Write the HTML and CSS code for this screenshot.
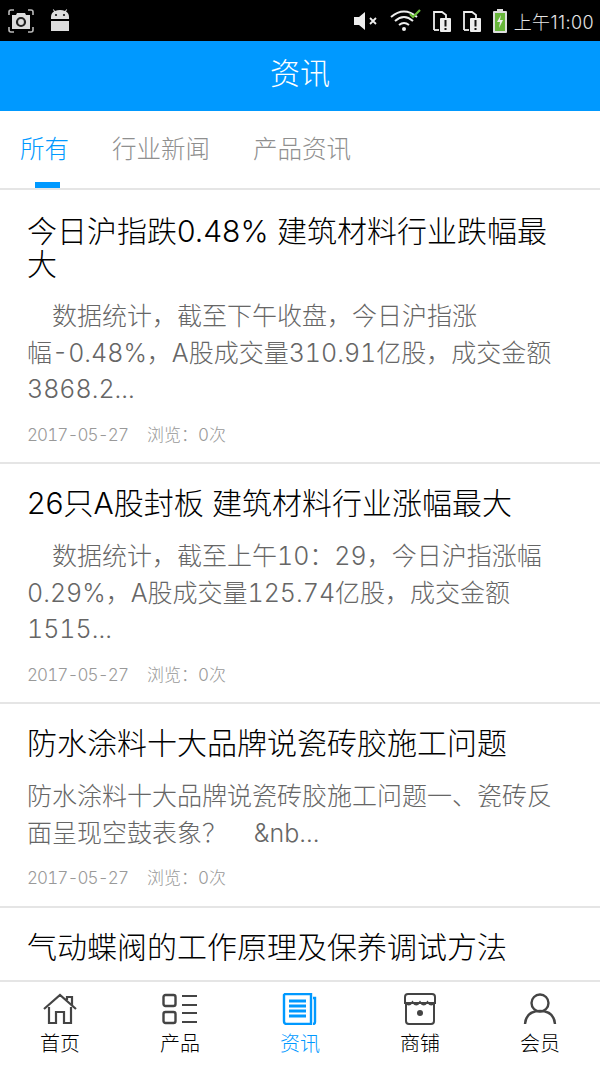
FILE: index.html
```html
<!DOCTYPE html>
<html lang="zh-CN">
<head>
<meta charset="utf-8">
<title>资讯</title>
<link rel="stylesheet" href="styles.css">
</head>
<body>
<div class="page">
  <div class="statusbar">
    <div class="status-left">
      <svg class="ic-shot" viewBox="0 0 26 24"><path d="M1 6V3q0-2 2-2h3M20 1h3q2 0 2 2v3M1 18v3q0 2 2 2h3M25 18v3q0 2-2 2h-3" fill="none" stroke="#bbb" stroke-width="1.6"/><path d="M4 6h4l1-2h8l1 2h4v14H4z" fill="#ddd"/><circle cx="13" cy="13" r="4" fill="none" stroke="#222" stroke-width="2.2"/></svg>
      <svg class="ic-android" viewBox="0 0 20 23"><path d="M1 10V8q0-4 3-5.500L2.800.6l.7-.4L5 2q5-1.800 10 0L16.500.2l.7.4L16 2.500q3 1.500 3 5.500v2z" fill="#ddd"/><circle cx="6" cy="6" r="1.100" fill="#111"/><circle cx="14" cy="6" r="1.100" fill="#111"/><path d="M1 12h18v10H1z" fill="#ddd"/></svg>
    </div>
    <div class="status-right">
      <svg class="ic-vol" viewBox="0 0 26 20"><path d="M1 6h5l6-5v18l-6-5H1z" fill="#eee"/><path d="M17 7l6 6M23 7l-6 6" stroke="#eee" stroke-width="1.800"/></svg>
      <svg class="ic-wifi" viewBox="0 0 32 24"><path d="M1 8q13-11 26 0M5 12q9-8 18 0M9 16q5-4 10 0" fill="none" stroke="#eee" stroke-width="2"/><circle cx="14" cy="20" r="2" fill="#eee"/><path d="M20 5l3 3 7-7" fill="none" stroke="#6fc13c" stroke-width="2.200"/></svg>
      <svg class="ic-sim" viewBox="0 0 20 22"><path d="M2 20V2h8l4 3v3" fill="none" stroke="#eee" stroke-width="1.800"/><path d="M2 20h5" stroke="#eee" stroke-width="1.800"/><rect x="8" y="8" width="11" height="14" rx="1" fill="#eee"/><path d="M13.500 10v6.500M13.500 18v2" stroke="#111" stroke-width="2"/></svg>
      <svg class="ic-sim" viewBox="0 0 20 22"><path d="M2 20V2h8l4 3v3" fill="none" stroke="#eee" stroke-width="1.800"/><path d="M2 20h5" stroke="#eee" stroke-width="1.800"/><rect x="8" y="8" width="11" height="14" rx="1" fill="#eee"/><path d="M13.500 10v6.500M13.500 18v2" stroke="#111" stroke-width="2"/></svg>
      <svg class="ic-batt" viewBox="0 0 16 24"><path d="M5 0h6v2h3q1 0 1 1v20q0 1-1 1H2q-1 0-1-1V3q0-1 1-1h3z" fill="#ddd"/><rect x="3" y="4" width="10" height="18" fill="#67b53a"/><path d="M9 6l-4 7h3l-1 6 4-8H8z" fill="#eee"/></svg>
      <span class="clock">上午11:00</span>
    </div>
  </div>
  <header class="topbar">资讯</header>
  <nav class="tabs">
    <a class="tab tab-active">所有</a>
    <a class="tab">行业新闻</a>
    <a class="tab">产品资讯</a>
  </nav>
  <main class="list">
    <article class="item">
      <h2 class="item-title">今日沪指跌0.48% 建筑材料行业跌幅最大</h2>
      <p class="item-text">　数据统计，截至下午收盘，今日沪指涨幅-0.48%，A股成交量310.91亿股，成交金额3868.2...</p>
      <div class="item-meta"><span class="item-date">2017-05-27</span><span>浏览：0次</span></div>
    </article>
    <article class="item">
      <h2 class="item-title">26只A股封板 建筑材料行业涨幅最大</h2>
      <p class="item-text">　数据统计，截至上午10：29，今日沪指涨幅0.29%，A股成交量125.74亿股，成交金额1515...</p>
      <div class="item-meta"><span class="item-date">2017-05-27</span><span>浏览：0次</span></div>
    </article>
    <article class="item">
      <h2 class="item-title">防水涂料十大品牌说瓷砖胶施工问题</h2>
      <p class="item-text">防水涂料十大品牌说瓷砖胶施工问题一、瓷砖反面呈现空鼓表象？ &nbsp; &nbsp;&amp;nb...</p>
      <div class="item-meta"><span class="item-date">2017-05-27</span><span>浏览：0次</span></div>
    </article>
    <article class="item">
      <h2 class="item-title">气动蝶阀的工作原理及保养调试方法</h2>
    </article>
  </main>
  <footer class="tabbar">
    <a class="nav">
      <svg class="nav-ic" viewBox="0 0 36 32"><path d="M2 16L18 2l16 14M25 7V4h5v8M7 14v16h7V19h8v11h7V14" fill="none" stroke="#444" stroke-width="2.200"/></svg>
      <span>首页</span>
    </a>
    <a class="nav">
      <svg class="nav-ic" viewBox="0 0 36 32"><rect x="1.500" y="2" width="12" height="11" rx="2" fill="none" stroke="#444" stroke-width="2.400"/><rect x="1.500" y="19" width="12" height="11" rx="2" fill="none" stroke="#444" stroke-width="2.400"/><path d="M20 3h15M20 12h15M20 20h15M20 29h15" stroke="#444" stroke-width="2.200"/></svg>
      <span>产品</span>
    </a>
    <a class="nav nav-active">
      <svg class="nav-ic" viewBox="0 0 36 32"><path d="M3 1h26v30H5q-3 0-3-3V2z" fill="none" stroke="#0099ff" stroke-width="2.400"/><path d="M31 5h2v24q0 2-2 2" fill="none" stroke="#0099ff" stroke-width="2.400"/><path d="M7 8h17M7 13h17M7 18h17M7 23h17" stroke="#0099ff" stroke-width="2.800"/></svg>
      <span>资讯</span>
    </a>
    <a class="nav">
      <svg class="nav-ic" viewBox="0 0 36 32"><path d="M6 1h24q3 0 3 3v6H3V4q0-3 3-3zM4 10v18q0 3 3 3h22q3 0 3-3V10" fill="none" stroke="#444" stroke-width="2"/><path d="M3 9q3.750 5 7.500 0q3.750 5 7.500 0q3.750 5 7.500 0q3.750 5 7.500 0" fill="none" stroke="#444" stroke-width="1.800"/><circle cx="18" cy="20" r="3" fill="#444"/></svg>
      <span>商铺</span>
    </a>
    <a class="nav">
      <svg class="nav-ic" viewBox="0 0 36 32"><circle cx="18" cy="10" r="8.500" fill="none" stroke="#444" stroke-width="2.400"/><path d="M3 31q1-13 15-13t15 13" fill="none" stroke="#444" stroke-width="2.400"/></svg>
      <span>会员</span>
    </a>
  </footer>
</div>
</body>
</html>
```
FILE: styles.css
```css
* { box-sizing: border-box; }
html, body { margin: 0; padding: 0; }
body { background: #fff; font-family: Inter, "Noto Sans CJK SC", sans-serif; font-weight: 300; font-variant-numeric: tabular-nums; }
.page { width: 600px; height: 1067px; display: flex; flex-direction: column; overflow: hidden; }

.statusbar { height: 41px; flex: none; background: #000; display: flex; justify-content: space-between; align-items: center; padding: 0 6px 0 8px; }
.status-left, .status-right { display: flex; align-items: center; }
.status-left { gap: 16px; }
.ic-shot { width: 26px; height: 24px; }
.ic-android { width: 20px; height: 23px; }
.ic-vol { width: 26px; height: 20px; }
.ic-wifi { width: 32px; height: 24px; margin-left: 11px; }
.ic-sim { width: 20px; height: 22px; margin-left: 10px; }
.ic-batt { width: 16px; height: 24px; margin-left: 10px; }
.clock { color: #e5e5e5; font-size: 18px; margin-left: 6px; letter-spacing: 0.4px; font-variant-numeric: normal; }

.topbar { height: 70px; flex: none; background: #0099ff; color: #fff; font-size: 30px; line-height: 64px; display: flex; justify-content: center; }

.tabs { height: 79px; flex: none; display: flex; padding-left: 20px; gap: 43px; border-bottom: 2px solid #e5e5e5; }
.tab { position: relative; font-size: 24.500px; line-height: 77px; color: #8f8f8f; }
.tab-active { color: #0099ff; }
.tab-active::after { content: ""; position: absolute; left: 15px; bottom: 0; width: 25px; height: 6px; background: #0099ff; }

.list { flex: 1; min-height: 0; overflow: hidden; }
.item { padding: 23px 27px 0; border-bottom: 2px solid #e5e5e5; }
.item:first-child { padding-top: 25px; }
.item:last-child { border-bottom: 0; }
.item-title { margin: 0; font-size: 30px; font-weight: 300; line-height: 33px; color: #000; font-variant-numeric: normal; }
.item-text { margin: 18px 0 0; font-size: 25px; line-height: 36.500px; color: #666; }
.item:first-child .item-text { margin-top: 17px; }
.item-meta { margin-top: 14px; height: 40.500px; display: flex; gap: 19px; font-size: 17px; line-height: 26px; color: #999; }
.item-date { letter-spacing: -0.9px; }

.tabbar { height: 87px; flex: none; background: #fff; border-top: 2px solid #e5e5e5; display: flex; }
.nav { flex: 1; display: flex; flex-direction: column; align-items: center; padding-top: 11px; font-size: 20px; line-height: 28px; color: #000; }
.nav-ic { width: 36px; height: 32px; margin-bottom: 5px; }
.nav-active { color: #0099ff; }
```
